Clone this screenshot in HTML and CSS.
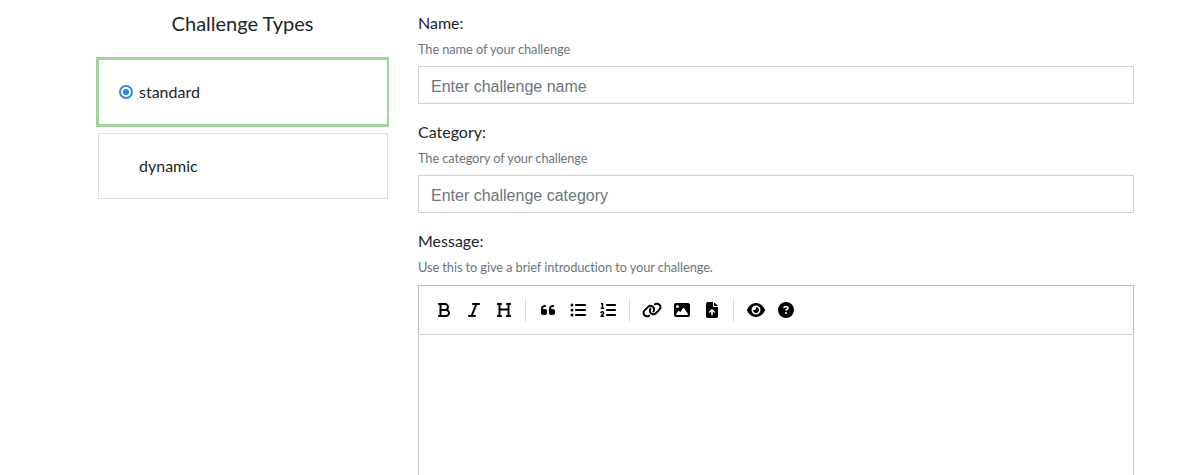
FILE: index.html
```html
<!DOCTYPE html>
<html lang="en">
<head>
<meta charset="utf-8">
<title>Create Challenge</title>
<link rel="stylesheet" href="styles.css">
</head>
<body>
<main class="page">
  <section class="types">
    <h5 class="types-title">Challenge Types</h5>
    <label class="type type-selected"><span class="radio"></span><span>standard</span></label>
    <label class="type"><span class="radio radio-hidden"></span><span>dynamic</span></label>
  </section>
  <form class="form">
    <div class="group">
      <label class="label" for="name">Name:</label>
      <small class="hint">The name of your challenge</small>
      <input class="input" id="name" type="text" placeholder="Enter challenge name">
    </div>
    <div class="group">
      <label class="label" for="category">Category:</label>
      <small class="hint">The category of your challenge</small>
      <input class="input" id="category" type="text" placeholder="Enter challenge category">
    </div>
    <div class="group group-message">
      <span class="label">Message:</span>
      <small class="hint">Use this to give a brief introduction to your challenge.</small>
      <div class="toolbar">
        <button class="tool" type="button" aria-label="Bold"><svg class="icon" viewBox="0 0 384 512"><path d="M0 64C0 46.3 14.3 32 32 32H80 96 224c70.7 0 128 57.3 128 128c0 31.3-11.3 60.1-30 82.3c37.1 22.4 62 63.1 62 109.7c0 70.7-57.3 128-128 128H96 80 32c-17.7 0-32-14.3-32-32s14.3-32 32-32H48V256 96H32C14.3 96 0 81.7 0 64zM224 224c35.3 0 64-28.7 64-64s-28.7-64-64-64H112V224H224zM112 288V416H256c35.3 0 64-28.7 64-64s-28.7-64-64-64H224 112z"/></svg></button>
        <button class="tool" type="button" aria-label="Italic"><svg class="icon" viewBox="0 0 384 512"><path d="M128 64c0-17.7 14.3-32 32-32H352c17.7 0 32 14.3 32 32s-14.3 32-32 32H293.3L160 416h64c17.7 0 32 14.3 32 32s-14.3 32-32 32H32c-17.7 0-32-14.3-32-32s14.3-32 32-32H90.7L224 96H160c-17.7 0-32-14.3-32-32z"/></svg></button>
        <button class="tool" type="button" aria-label="Heading"><svg class="icon" viewBox="0 0 448 512"><path d="M0 64C0 46.3 14.3 32 32 32H80h48c17.7 0 32 14.3 32 32s-14.3 32-32 32H112V208H336V96H320c-17.7 0-32-14.3-32-32s14.3-32 32-32h48 48c17.7 0 32 14.3 32 32s-14.3 32-32 32H400V240 416h16c17.7 0 32 14.3 32 32s-14.3 32-32 32H368 320c-17.7 0-32-14.3-32-32s14.3-32 32-32h16V272H112V416h16c17.7 0 32 14.3 32 32s-14.3 32-32 32H80 32c-17.7 0-32-14.3-32-32s14.3-32 32-32H48V240 96H32C14.3 96 0 81.7 0 64z"/></svg></button>
        <i class="separator"></i>
        <button class="tool" type="button" aria-label="Quote"><svg class="icon" viewBox="0 0 448 512"><path d="M0 216C0 149.7 53.7 96 120 96h8c17.7 0 32 14.3 32 32s-14.3 32-32 32h-8c-30.9 0-56 25.1-56 56v8h64c35.3 0 64 28.7 64 64v64c0 35.3-28.7 64-64 64H64c-35.3 0-64-28.7-64-64V320 288 216zm256 0c0-66.3 53.7-120 120-120h8c17.7 0 32 14.3 32 32s-14.3 32-32 32h-8c-30.9 0-56 25.1-56 56v8h64c35.3 0 64 28.7 64 64v64c0 35.3-28.7 64-64 64H320c-35.3 0-64-28.7-64-64V320 288 216z"/></svg></button>
        <button class="tool" type="button" aria-label="Bulleted list"><svg class="icon" viewBox="0 0 512 512"><path d="M64 144a48 48 0 1 0 0-96 48 48 0 1 0 0 96zM192 64c-17.7 0-32 14.3-32 32s14.3 32 32 32H480c17.7 0 32-14.3 32-32s-14.3-32-32-32H192zm0 160c-17.7 0-32 14.3-32 32s14.3 32 32 32H480c17.7 0 32-14.3 32-32s-14.3-32-32-32H192zm0 160c-17.7 0-32 14.3-32 32s14.3 32 32 32H480c17.7 0 32-14.3 32-32s-14.3-32-32-32H192zM64 464a48 48 0 1 0 0-96 48 48 0 1 0 0 96zm48-208a48 48 0 1 0 -96 0 48 48 0 1 0 96 0z"/></svg></button>
        <button class="tool" type="button" aria-label="Numbered list"><svg class="icon" viewBox="0 0 512 512"><path d="M24 56c0-13.3 10.7-24 24-24H80c13.3 0 24 10.7 24 24V176h16c13.3 0 24 10.7 24 24s-10.7 24-24 24H40c-13.3 0-24-10.7-24-24s10.7-24 24-24H56V80H48C34.7 80 24 69.3 24 56zM86.7 341.2c-6.5-7.4-18.3-6.9-24 1.2L51.5 357.9c-7.7 10.8-22.7 13.3-33.5 5.6s-13.3-22.7-5.6-33.5l11.1-15.6c23.7-33.2 72.3-35.6 99.2-4.9c21.3 24.4 20.8 60.9-1.1 84.7L86.8 432H120c13.3 0 24 10.7 24 24s-10.7 24-24 24H32c-9.5 0-18.2-5.6-22-14.4s-2.1-18.9 4.3-25.9l72-78c5.3-5.8 5.4-14.6 .3-20.5zM224 64H480c17.7 0 32 14.3 32 32s-14.3 32-32 32H224c-17.7 0-32-14.3-32-32s14.3-32 32-32zm0 160H480c17.7 0 32 14.3 32 32s-14.3 32-32 32H224c-17.7 0-32-14.3-32-32s14.3-32 32-32zm0 160H480c17.7 0 32 14.3 32 32s-14.3 32-32 32H224c-17.7 0-32-14.3-32-32s14.3-32 32-32z"/></svg></button>
        <i class="separator"></i>
        <button class="tool" type="button" aria-label="Link"><svg class="icon" viewBox="0 0 640 512"><path d="M579.8 267.7c56.5-56.5 56.5-148 0-204.5c-50-50-128.8-56.5-186.3-15.4l-1.6 1.1c-14.4 10.3-17.7 30.3-7.4 44.6s30.3 17.7 44.6 7.4l1.6-1.1c32.1-22.9 76-19.3 103.8 8.6c31.5 31.5 31.5 82.5 0 114L422.3 334.8c-31.5 31.5-82.5 31.5-114 0c-27.9-27.9-31.5-71.8-8.6-103.8l1.1-1.6c10.3-14.4 6.9-34.4-7.4-44.6s-34.4-6.9-44.6 7.4l-1.1 1.6C206.5 251.2 213 330 263 380c56.5 56.5 148 56.5 204.5 0L579.8 267.7zM60.2 244.3c-56.5 56.5-56.5 148 0 204.5c50 50 128.8 56.5 186.3 15.4l1.6-1.1c14.4-10.3 17.7-30.3 7.4-44.6s-30.3-17.7-44.6-7.4l-1.6 1.1c-32.1 22.9-76 19.3-103.8-8.6C74 372 74 321 105.5 289.5L217.7 177.2c31.5-31.5 82.5-31.5 114 0c27.9 27.9 31.5 71.8 8.6 103.9l-1.1 1.6c-10.3 14.4-6.9 34.4 7.4 44.6s34.4 6.9 44.6-7.4l1.1-1.6C433.5 260.8 427 182 377 132c-56.5-56.5-148-56.5-204.5 0L60.2 244.3z"/></svg></button>
        <button class="tool" type="button" aria-label="Image"><svg class="icon" viewBox="0 0 512 512"><path fill-rule="evenodd" d="M0 96C0 60.7 28.7 32 64 32H448c35.3 0 64 28.7 64 64V416c0 35.3-28.7 64-64 64H64c-35.3 0-64-28.7-64-64V96zM323.8 202.5c-4.5-6.6-11.9-10.5-19.8-10.5s-15.4 3.9-19.8 10.5l-87 127.6L170.7 297c-4.6-5.7-11.5-9-18.7-9s-14.2 3.3-18.7 9l-64 80c-5.8 7.2-6.9 17.1-2.9 25.4s12.4 13.6 21.6 13.6h96 32H424c8.9 0 17.1-4.9 21.2-12.8s3.6-17.4-1.4-24.7l-120-176zM112 192a48 48 0 1 0 0-96 48 48 0 1 0 0 96z"/></svg></button>
        <button class="tool" type="button" aria-label="Upload file"><svg class="icon" viewBox="0 0 384 512"><path fill-rule="evenodd" d="M64 0C28.7 0 0 28.7 0 64V448c0 35.3 28.7 64 64 64H320c35.3 0 64-28.7 64-64V160H256c-17.7 0-32-14.3-32-32V0H64zM256 0V128H384L256 0zM216 408c0 13.3-10.7 24-24 24s-24-10.7-24-24V305.9l-31 31c-9.4 9.4-24.6 9.4-33.9 0s-9.4-24.6 0-33.9l72-72c9.4-9.4 24.6-9.4 33.9 0l72 72c9.4 9.4 9.4 24.6 0 33.9s-24.6 9.4-33.9 0l-31-31V408z"/></svg></button>
        <i class="separator"></i>
        <button class="tool" type="button" aria-label="Preview"><svg class="icon" viewBox="0 0 576 512"><path fill-rule="evenodd" d="M288 32c-80.8 0-145.5 36.8-192.6 80.6C48.6 156 17.3 208 2.5 243.7c-3.3 7.9-3.3 16.7 0 24.6C17.3 304 48.6 356 95.4 399.4C142.5 443.2 207.2 480 288 480s145.5-36.8 192.6-80.6c46.8-43.5 78.1-95.4 93-131.1c3.3-7.9 3.3-16.7 0-24.6c-14.9-35.7-46.2-87.7-93-131.1C433.5 68.8 368.8 32 288 32zM144 256a144 144 0 1 1 288 0 144 144 0 1 1 -288 0zm144-64c0 35.3-28.7 64-64 64c-7.1 0-13.9-1.2-20.3-3.3c-5.5-1.8-11.9 1.6-11.7 7.4c.3 6.9 1.3 13.8 3.2 20.7c13.7 51.2 66.4 81.6 117.6 67.9s81.6-66.4 67.9-117.6c-11.1-41.5-47.8-69.4-88.6-71.1c-5.8-.2-9.2 6.1-7.4 11.7c2.1 6.4 3.3 13.2 3.3 20.3z"/></svg></button>
        <button class="tool" type="button" aria-label="Help"><svg class="icon" viewBox="0 0 512 512"><path fill-rule="evenodd" d="M256 512A256 256 0 1 0 256 0a256 256 0 1 0 0 512zM169.8 165.3c7.9-22.3 29.1-37.3 52.8-37.3h58.3c34.9 0 63.1 28.3 63.1 63.1c0 22.6-12.1 43.5-31.7 54.8L280 264.4c-.2 13-10.9 23.6-24 23.6c-13.3 0-24-10.7-24-24V250.5c0-8.6 4.6-16.5 12.1-20.8l44.3-25.4c4.7-2.7 7.6-7.7 7.6-13.1c0-8.4-6.8-15.1-15.1-15.1H222.6c-3.4 0-6.4 2.1-7.5 5.3l-.4 1.2c-4.4 12.5-18.2 19-30.6 14.6s-19-18.2-14.6-30.6l.4-1.2zM224 352a32 32 0 1 1 64 0 32 32 0 1 1 -64 0z"/></svg></button>
      </div>
      <div class="editor"></div>
    </div>
  </form>
</main>
</body>
</html>
```
FILE: styles.css
```css
* {
  box-sizing: border-box;
}

body {
  margin: 0;
  background: #fff;
  color: #212529;
  font: 16px/24px Lato, sans-serif;
}

.page {
  display: flex;
  gap: 29px;
  height: 475px;
  padding: 11px 46px 0 96px;
}

.types {
  display: flex;
  flex-direction: column;
  flex: none;
  width: 293px;
}

.types-title {
  margin: 0 0 22px;
  font-size: 20px;
  font-weight: 400;
  line-height: 24px;
  text-align: center;
}

.type {
  display: flex;
  align-items: center;
  gap: 6px;
  height: 66px;
  margin: 6px 1px 0 2px;
  padding-left: 20px;
  border: 1px solid #dedede;
}

.type-selected {
  height: 70px;
  margin: 0;
  border: 3px solid #a3d39c;
  border-right-width: 2px;
}

.radio {
  width: 14px;
  height: 14px;
  border: 2px solid #3584e4;
  border-radius: 50%;
  background: radial-gradient(circle, #3584e4 2.8px, #fff 3.5px);
}

.radio-hidden {
  visibility: hidden;
}

.form {
  display: flex;
  flex-direction: column;
  flex: 1;
}

.group {
  display: flex;
  flex-direction: column;
  margin-bottom: 16px;
}

.group-message {
  flex: 1;
  margin-bottom: 0;
}

.label {
  height: 28px;
}

.hint {
  height: 27px;
  padding-top: 1px;
  color: #6c757d;
  font-size: 12.8px;
  line-height: 19px;
  letter-spacing: -0.085px;
}

.input {
  width: 100%;
  height: 38px;
  padding: 8px 12px 4px;
  border: 1px solid #ced4da;
  border-radius: 0;
  font: 16px/24px "Liberation Sans", sans-serif;
}

.input::placeholder {
  color: #6c757d;
  opacity: 1;
}

.toolbar {
  display: flex;
  align-items: center;
  height: 49px;
  margin-top: 1px;
  padding: 0 10px;
  border: 1px solid #bbb;
  border-bottom: 0;
}

.tool {
  display: flex;
  align-items: center;
  justify-content: center;
  width: 30px;
  height: 30px;
  padding: 0 0.6px 0 0;
  border: 0;
  background: transparent;
}

.icon {
  height: 16px;
  fill: #000;
}

.separator {
  width: 2px;
  height: 24px;
  margin: 0 6px;
  border-left: 1px solid #d9d9d9;
}

.editor {
  flex: 1;
  border: 1px solid #ced0d2;
  border-bottom: 0;
}
```
